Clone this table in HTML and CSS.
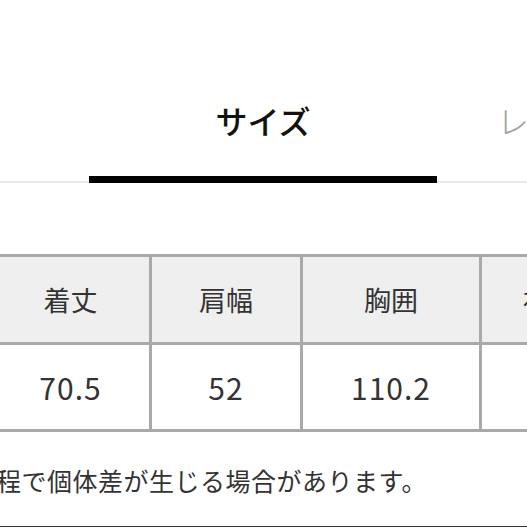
FILE: index.html
```
<!DOCTYPE html>
<html lang="ja">
<head>
<meta charset="utf-8">
<link rel="stylesheet" href="styles.css">
</head>
<body>
<div class="page">
  <nav class="tabs">
    <div class="tab active">サイズ</div>
    <div class="tab">レビュー</div>
  </nav>
  <div class="size-table">
    <div class="cell head">着丈</div>
    <div class="cell head">肩幅</div>
    <div class="cell head">胸囲</div>
    <div class="cell head">袖丈</div>
    <div class="cell">70.5</div>
    <div class="cell">52</div>
    <div class="cell">110.2</div>
    <div class="cell">60</div>
  </div>
  <p class="note">程で個体差が生じる場合があります。</p>
</div>
</body>
</html>
```
FILE: styles.css
```
html, body {
  margin: 0;
  padding: 0;
  background: #fff;
}
body {
  width: 527px;
  height: 527px;
  overflow: hidden;
  font-family: "Noto Sans CJK JP", "Noto Sans", sans-serif;
  color: #333;
}
.page {
  height: 526px;
  border-bottom: 1px solid #333;
  overflow: hidden;
}
.tabs {
  display: flex;
  padding-top: 100px;
  padding-left: 89px;
  border-bottom: 2px solid #e8e8e8;
  white-space: nowrap;
}
.tab {
  flex: 0 0 auto;
  font-size: 32px;
  line-height: 40px;
  padding-bottom: 36px;
  margin-bottom: -2px;
  border-bottom: 7px solid transparent;
  color: #a0a0a0;
  font-weight: 300;
}
.tab.active {
  width: 348px;
  text-align: center;
  color: #111;
  font-weight: 500;
  border-bottom-color: #000;
}
.tab + .tab {
  padding-left: 60px;
  letter-spacing: 4px;
}
.size-table {
  display: grid;
  grid-template-columns: 157px 148px 176px 136px;
  grid-auto-rows: 85px 84px;
  gap: 3px;
  padding: 3px;
  margin: 71px 0 0 -11px;
  width: max-content;
  background: #a9a9a9;
}
.cell {
  display: flex;
  align-items: center;
  justify-content: center;
  background: #fff;
  font-size: 30px;
  letter-spacing: 1px;
  color: #333;
}
.cell.head {
  background: #efefef;
  font-size: 27px;
  letter-spacing: 0;
}
.note {
  margin: 30px 0 0 -4px;
  font-size: 25px;
  letter-spacing: 0.5px;
  line-height: 36px;
  color: #333;
  white-space: nowrap;
}
```
